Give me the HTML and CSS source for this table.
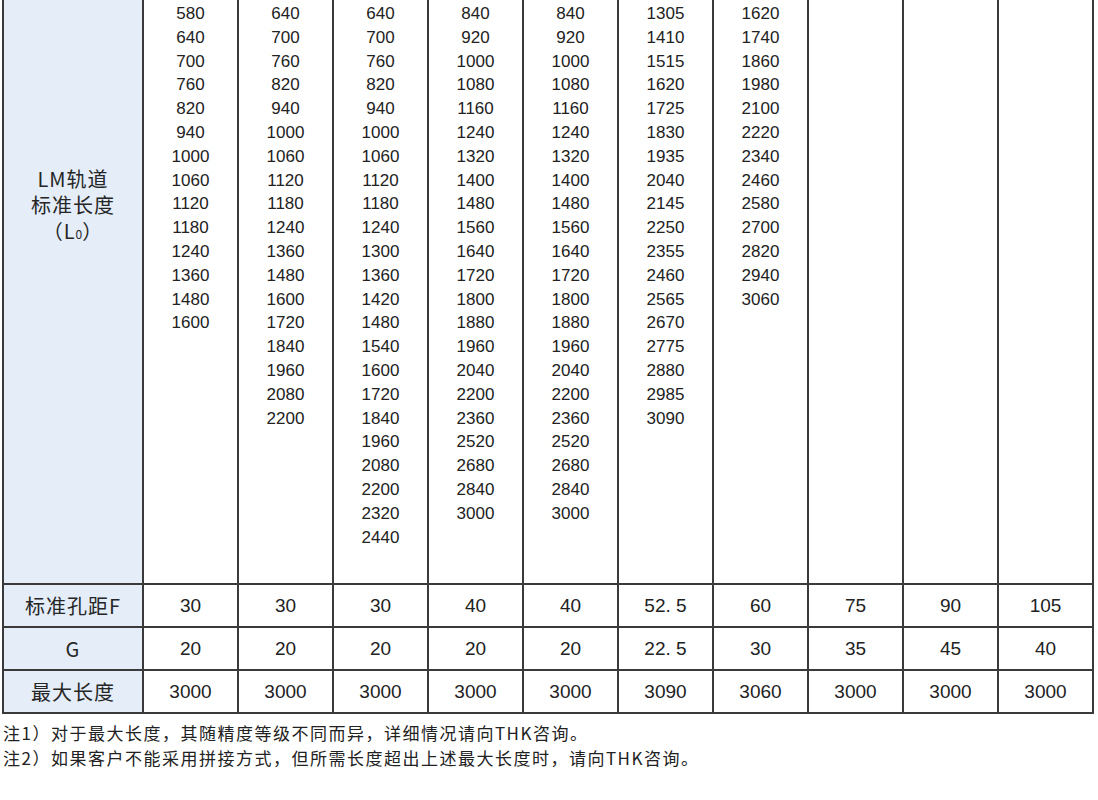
FILE: index.html
```html
<!DOCTYPE html>
<html lang="zh-CN">
<head>
<meta charset="utf-8">
<title>LM轨道标准长度</title>
<link rel="stylesheet" href="styles.css">
</head>
<body>
<div class="sheet">
  <div class="grid">
    <div class="cell label big"><span>LM轨道</span><span>标准长度</span><span class="lo">（L<sub>0</sub>）</span></div>
    <div class="cell nums"><span>580</span><span>640</span><span>700</span><span>760</span><span>820</span><span>940</span><span>1000</span><span>1060</span><span>1120</span><span>1180</span><span>1240</span><span>1360</span><span>1480</span><span>1600</span></div>
    <div class="cell nums"><span>640</span><span>700</span><span>760</span><span>820</span><span>940</span><span>1000</span><span>1060</span><span>1120</span><span>1180</span><span>1240</span><span>1360</span><span>1480</span><span>1600</span><span>1720</span><span>1840</span><span>1960</span><span>2080</span><span>2200</span></div>
    <div class="cell nums"><span>640</span><span>700</span><span>760</span><span>820</span><span>940</span><span>1000</span><span>1060</span><span>1120</span><span>1180</span><span>1240</span><span>1300</span><span>1360</span><span>1420</span><span>1480</span><span>1540</span><span>1600</span><span>1720</span><span>1840</span><span>1960</span><span>2080</span><span>2200</span><span>2320</span><span>2440</span></div>
    <div class="cell nums"><span>840</span><span>920</span><span>1000</span><span>1080</span><span>1160</span><span>1240</span><span>1320</span><span>1400</span><span>1480</span><span>1560</span><span>1640</span><span>1720</span><span>1800</span><span>1880</span><span>1960</span><span>2040</span><span>2200</span><span>2360</span><span>2520</span><span>2680</span><span>2840</span><span>3000</span></div>
    <div class="cell nums"><span>840</span><span>920</span><span>1000</span><span>1080</span><span>1160</span><span>1240</span><span>1320</span><span>1400</span><span>1480</span><span>1560</span><span>1640</span><span>1720</span><span>1800</span><span>1880</span><span>1960</span><span>2040</span><span>2200</span><span>2360</span><span>2520</span><span>2680</span><span>2840</span><span>3000</span></div>
    <div class="cell nums"><span>1305</span><span>1410</span><span>1515</span><span>1620</span><span>1725</span><span>1830</span><span>1935</span><span>2040</span><span>2145</span><span>2250</span><span>2355</span><span>2460</span><span>2565</span><span>2670</span><span>2775</span><span>2880</span><span>2985</span><span>3090</span></div>
    <div class="cell nums"><span>1620</span><span>1740</span><span>1860</span><span>1980</span><span>2100</span><span>2220</span><span>2340</span><span>2460</span><span>2580</span><span>2700</span><span>2820</span><span>2940</span><span>3060</span></div>
    <div class="cell nums"></div>
    <div class="cell nums"></div>
    <div class="cell nums"></div>

    <div class="cell label row">标准孔距F</div>
    <div class="cell val">30</div>
    <div class="cell val">30</div>
    <div class="cell val">30</div>
    <div class="cell val">40</div>
    <div class="cell val">40</div>
    <div class="cell val">52. 5</div>
    <div class="cell val">60</div>
    <div class="cell val">75</div>
    <div class="cell val">90</div>
    <div class="cell val">105</div>

    <div class="cell label row">G</div>
    <div class="cell val">20</div>
    <div class="cell val">20</div>
    <div class="cell val">20</div>
    <div class="cell val">20</div>
    <div class="cell val">20</div>
    <div class="cell val">22. 5</div>
    <div class="cell val">30</div>
    <div class="cell val">35</div>
    <div class="cell val">45</div>
    <div class="cell val">40</div>

    <div class="cell label row">最大长度</div>
    <div class="cell val">3000</div>
    <div class="cell val">3000</div>
    <div class="cell val">3000</div>
    <div class="cell val">3000</div>
    <div class="cell val">3000</div>
    <div class="cell val">3090</div>
    <div class="cell val">3060</div>
    <div class="cell val">3000</div>
    <div class="cell val">3000</div>
    <div class="cell val">3000</div>
  </div>
  <div class="notes">
    <p>注1）对于最大长度，其随精度等级不同而异，详细情况请向THK咨询。</p>
    <p>注2）如果客户不能采用拼接方式，但所需长度超出上述最大长度时，请向THK咨询。</p>
  </div>
</div>
</body>
</html>
```

FILE: styles.css
```css
html, body {
  margin: 0;
  padding: 0;
  background: #ffffff;
}

body {
  color: #222222;
  font-family: "Liberation Sans", Arial, sans-serif;
  overflow: hidden;
}

.sheet {
  padding-left: 2px;
}

.grid {
  display: grid;
  grid-template-columns: 138px repeat(10, 93px);
  grid-template-rows: 583px 41px 41px 41px;
  gap: 2px;
  padding: 2px;
  margin-top: -2px;
  width: max-content;
  background: #3a3a3a;
}

.cell {
  background: #ffffff;
}

.label {
  background: #e4edf8;
  font-family: "Noto Sans CJK SC", sans-serif;
  font-size: 20px;
  letter-spacing: 1px;
  color: #262626;
}

.big {
  display: flex;
  flex-direction: column;
  align-items: center;
  padding-top: 166px;
  line-height: 26px;
}

.big sub {
  font-size: 12px;
  vertical-align: 0;
  letter-spacing: 0;
}

.row {
  display: flex;
  align-items: center;
  justify-content: center;
}

.nums {
  display: flex;
  flex-direction: column;
  align-items: center;
  padding-top: 2px;
  font-size: 17px;
  line-height: 23.8px;
}

.val {
  display: flex;
  align-items: center;
  justify-content: center;
  font-size: 19px;
}

.notes {
  margin-top: 6px;
  padding-left: 1px;
  font-family: "Noto Sans CJK SC", sans-serif;
  font-size: 17px;
  letter-spacing: 1.5px;
  line-height: 25px;
  color: #222222;
}

.notes p {
  margin: 0;
}
```
